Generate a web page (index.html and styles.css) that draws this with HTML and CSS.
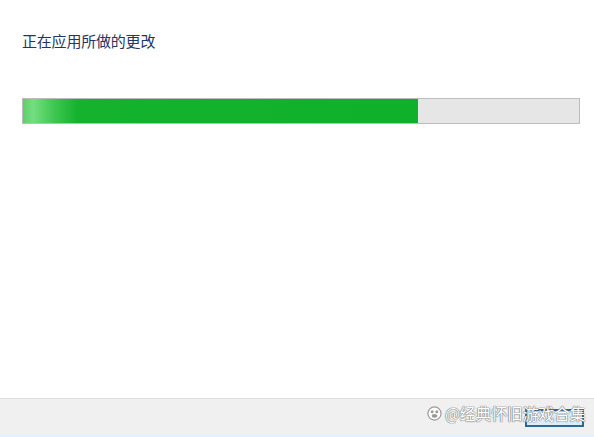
FILE: index.html
```html
<!DOCTYPE html>
<html lang="zh-CN">
<head>
    <meta charset="UTF-8">
    <meta name="viewport" content="width=device-width, initial-scale=1.0">
    <title>Windows 功能</title>
    <link rel="stylesheet" href="styles.css">
</head>
<body>
    <div class="dialog">
        <div class="content">
            <h1 class="title">正在应用所做的更改</h1>

            <!-- progress -->
            <div class="progress">
                <div class="progress-fill" style="width: 71%"></div>
            </div>
        </div>

        <!-- bottom bar -->
        <div class="footer">
            <div class="btn" role="button" aria-label="取消"></div>
        </div>

        <div class="watermark">
            <svg class="wm-logo" width="15" height="15" viewBox="0 0 16 16">
                <circle cx="8" cy="8" r="7" fill="#fff" stroke="#9a9a9a" stroke-width="1.3"/>
                <circle cx="5.5" cy="6" r="1.6" fill="#9a9a9a"/>
                <circle cx="10.5" cy="6" r="1.6" fill="#9a9a9a"/>
                <ellipse cx="8" cy="10.5" rx="3" ry="2" fill="#9a9a9a"/>
            </svg>
            <span>@经典怀旧游戏合集</span>
        </div>
    </div>
</body>
</html>
```

FILE: styles.css
```css
*{
    margin: 0;
    padding: 0;
    box-sizing: border-box;
}

body{
    background: #fff;
    font-family: "Noto Sans CJK SC", "Liberation Sans", sans-serif;
}

.dialog{
    width: 594px;
    height: 437px;
    display: flex;
    flex-direction: column;
    position: relative;
}

.content{
    flex: 1;
    padding: 30px 14px 0 22px;
}

.title{
    font-size: 15px;
    font-weight: normal;
    line-height: 22px;
    color: #1e3766;
    letter-spacing: -0.2px;
}

.progress{
    margin-top: 46px;
    height: 26px;
    border: 1px solid #bcbcbc;
    background: #e6e6e6;
}

.progress-fill{
    height: 100%;
    background: linear-gradient(90deg, #5ccf68 0px, #74de80 10px, #3cc650 32px, #14b22d 55px, #0fb12a 100%);
}

.footer{
    height: 39px;
    background: #f0f0f0;
    border-top: 1px solid #dcdcdc;
    border-bottom: 3px solid #e4f1fc;
    display: flex;
    justify-content: flex-end;
    align-items: center;
    padding: 2px 10px 0 0;
}

.btn{
    width: 59px;
    height: 18px;
    background: #dcecf8;
    border: 2px solid #2c6a92;
}

.watermark{
    position: absolute;
    left: 427px;
    top: 401px;
    display: flex;
    align-items: center;
    gap: 3px;
    font-size: 16px;
    letter-spacing: -0.3px;
    color: #fff;
    text-shadow: 0 0 1px #707070, 0 0 1px #707070, 0 0 1px #707070;
}
```
